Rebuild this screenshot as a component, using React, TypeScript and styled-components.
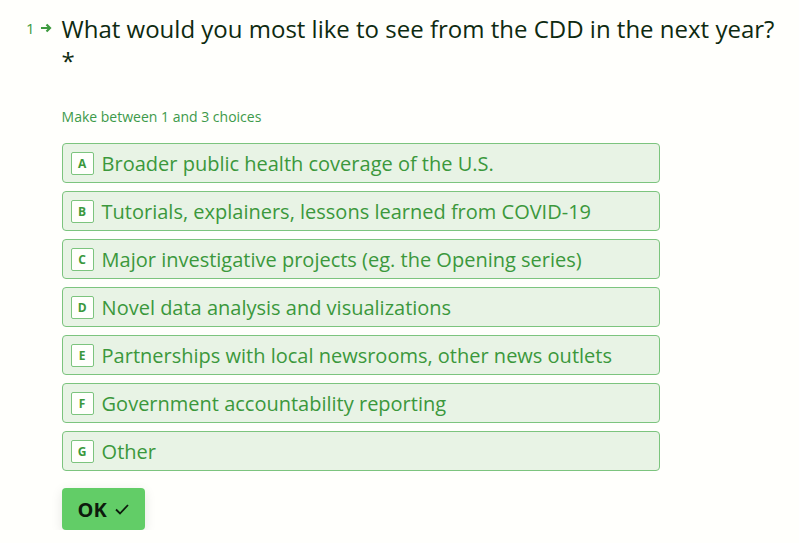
import styled, { createGlobalStyle } from "styled-components";

const GlobalStyle = createGlobalStyle`
  html, body {
    margin: 0;
    padding: 0;
    background: #fffffc;
  }
  body {
    font-family: "Open Sans", "Noto Sans", sans-serif;
  }
`;

const Page = styled.div`
  display: flex;
  gap: 10px;
  padding: 13px 0 0 26px;
`;

const Counter = styled.div`
  display: flex;
  align-items: center;
  gap: 5px;
  height: 30px;
  color: #3d9a3f;
  font-size: 15px;
`;

const Body = styled.div`
  display: flex;
  flex-direction: column;
  width: 740px;
`;

const Question = styled.h1`
  margin: 0;
  font-size: 24px;
  font-weight: 400;
  line-height: 32px;
  color: #0e2a10;
`;

const Hint = styled.div`
  margin-top: 30px;
  font-size: 14px;
  color: #3d9a4a;
  line-height: 20px;
`;

const Choices = styled.div`
  display: flex;
  flex-direction: column;
  gap: 8px;
  margin-top: 16px;
  width: 598px;
`;

const Choice = styled.div`
  display: flex;
  align-items: center;
  gap: 8px;
  height: 40px;
  box-sizing: border-box;
  padding: 0 8px;
  background: #e8f3e5;
  border: 1px solid #7cc47e;
  border-radius: 4px;
  color: #3b983c;
  font-size: 20px;
`;

const Key = styled.span`
  display: flex;
  flex-shrink: 0;
  align-items: center;
  justify-content: center;
  width: 23px;
  height: 23px;
  box-sizing: border-box;
  background: #fffffc;
  border: 1px solid #7cc47e;
  border-radius: 2px;
  font-size: 12px;
  font-weight: 700;
`;

const OkButton = styled.button`
  display: flex;
  align-items: center;
  gap: 7px;
  align-self: flex-start;
  margin-top: 17px;
  height: 42px;
  padding: 0 15px 0 16px;
  border: none;
  border-radius: 4px;
  background: #62cd67;
  box-shadow: 0 3px 12px rgba(0, 0, 0, 0.1);
  color: #0d1b0d;
  font-family: "Open Sans", sans-serif;
  font-size: 20px;
  font-weight: 700;
`;

const choices = [
  "Broader public health coverage of the U.S.",
  "Tutorials, explainers, lessons learned from COVID-19",
  "Major investigative projects (eg. the Opening series)",
  "Novel data analysis and visualizations",
  "Partnerships with local newsrooms, other news outlets",
  "Government accountability reporting",
  "Other",
];

export default function App() {
  return (
    <>
      <GlobalStyle />
      <Page>
        <Counter>
          1
          <svg width="12" height="12" viewBox="0 0 12 12" fill="none">
            <path
              d="M1 6h9M6.5 2.5 10 6l-3.5 3.5"
              stroke="#3d9a3f"
              strokeWidth="2.2"
            />
          </svg>
        </Counter>
        <Body>
          <Question>
            What would you most like to see from the CDD in the next year?
            <br />*
          </Question>
          <Hint>Make between 1 and 3 choices</Hint>
          <Choices>
            {choices.map((c, i) => (
              <Choice key={c}>
                <Key>{String.fromCharCode(65 + i)}</Key>
                {c}
              </Choice>
            ))}
          </Choices>
          <OkButton>
            OK
            <svg width="16" height="16" viewBox="0 0 16 16" fill="none">
              <path
                d="M2 8.5 6 12.5 14 4"
                stroke="#0d1b0d"
                strokeWidth="1.8"
              />
            </svg>
          </OkButton>
        </Body>
      </Page>
    </>
  );
}
